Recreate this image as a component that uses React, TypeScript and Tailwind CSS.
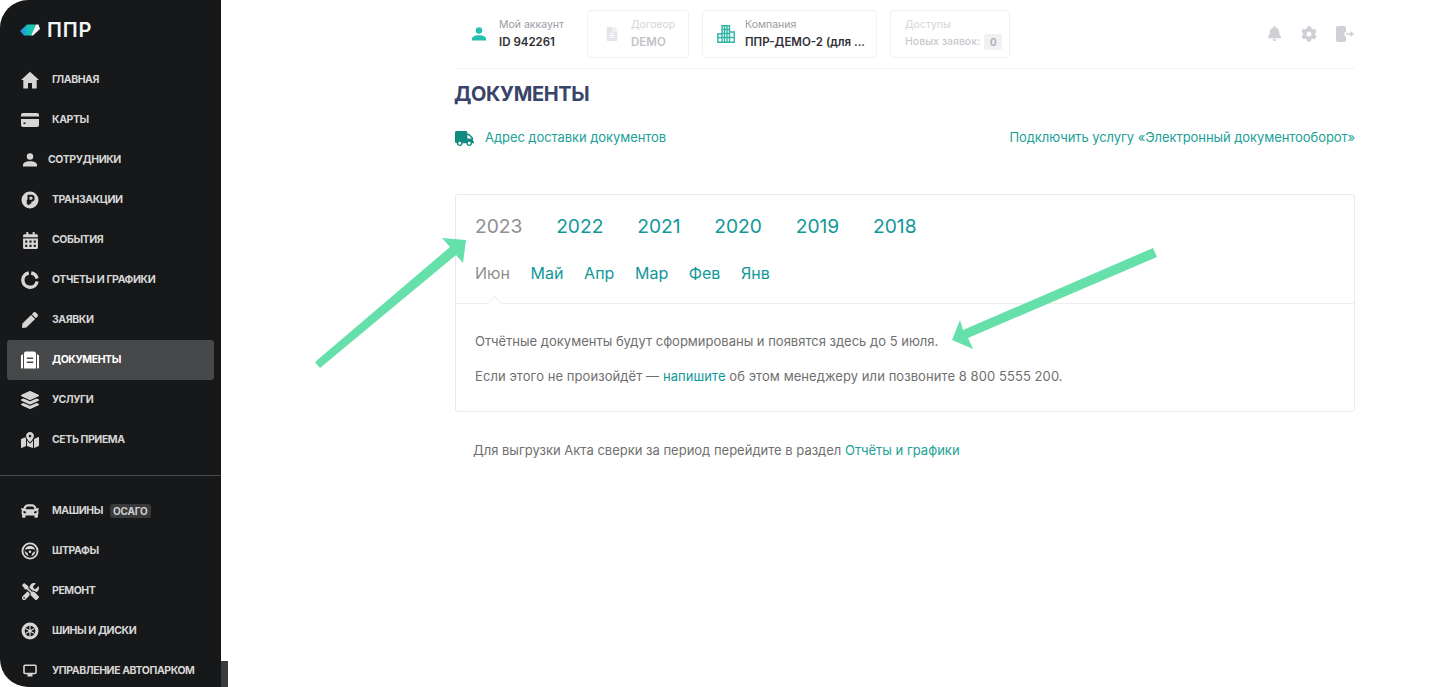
import React from "react";
import { FaCalendarAlt, FaPen, FaLayerGroup, FaMapMarkedAlt, FaCar, FaTools, FaBell, FaCog, FaTruck, FaFileAlt } from "react-icons/fa";

const Home = () => (
  <svg viewBox="0 0 18 18" className="w-[18px] h-[18px]" fill="currentColor"><path d="M9 .8 18 9h-2.300v8.500H11v-5.500H7v5.500H2.300V9H0L9 .8Z" /></svg>
);
const Card = () => (
  <svg viewBox="0 0 18 14" className="w-[18px] h-[14px]" fill="currentColor"><path d="M2 0h14a2 2 0 0 1 2 2v1.500H0V2a2 2 0 0 1 2-2Z" /><path fillRule="evenodd" d="M0 6h18v6a2 2 0 0 1-2 2H2a2 2 0 0 1-2-2V6Zm2.500 3.500v1.500h2V9.500h-2Z" /></svg>
);
const Person = () => (
  <svg viewBox="0 0 14 14" className="w-[14px] h-[14px]" fill="currentColor"><circle cx="7" cy="3.500" r="3.200" /><path d="M0 12c0-2.600 3-3.800 7-3.800s7 1.200 7 3.800v1.500H0V12Z" /></svg>
);
const Ruble = () => (
  <svg viewBox="0 0 18 18" className="w-[18px] h-[18px]"><circle cx="9" cy="9" r="8.500" fill="currentColor" /><path d="M7.500 14V4.800h2.700a2.400 2.400 0 0 1 0 4.900H5.800M5.800 11.800h4.500" fill="none" stroke="#17181a" strokeWidth="2" /></svg>
);
const Donut = () => (
  <svg viewBox="0 0 18 18" className="w-[18px] h-[18px]" fill="none" stroke="currentColor" strokeWidth="3.400"><path d="M10.200 2A7.200 7.200 0 0 1 16.100 7.500" /><path d="M16.100 10.500A7.200 7.200 0 1 1 7.800 2" /></svg>
);
const Doc = () => (
  <svg viewBox="0 0 18 18" className="w-[18px] h-[18px]" fill="currentColor"><path d="M0 4.500 2 3v14.500H1a1 1 0 0 1-1-1v-12Zm18 0L16 3v14.500h1a1 1 0 0 0 1-1v-12Z" /><path fillRule="evenodd" d="M5 .5h8a2 2 0 0 1 2 2v15H3v-15a2 2 0 0 1 2-2Zm.8 6v1.500h6.400V6.500H5.800Zm0 4v1.500h6.400v-1.500H5.800Z" /></svg>
);
const Wheel = () => (
  <svg viewBox="0 0 18 18" className="w-[18px] h-[18px]"><circle cx="9" cy="9" r="8.500" fill="currentColor" /><circle cx="9" cy="9" r="6" fill="none" stroke="#17181a" strokeWidth="1.300" /><path d="M3 8c3.500-1.400 8.500-1.400 12 0l-2.200 2.200c-1 0-1.800.8-2.300 4.300h-3c-.5-3.500-1.300-4.300-2.300-4.300L3 8Z" fill="#17181a" /><circle cx="9" cy="9.800" r="1.300" fill="currentColor" /></svg>
);
const Tire = () => (
  <svg viewBox="0 0 18 18" className="w-[18px] h-[18px]"><circle cx="9" cy="9" r="8.500" fill="currentColor" /><circle cx="9" cy="9" r="5.300" fill="#17181a" /><circle cx="9" cy="9" r="1.500" fill="currentColor" /><path d="M9 4v10M4.700 6.500l8.600 5M13.300 6.500l-8.600 5" stroke="currentColor" strokeWidth="1.200" /></svg>
);
const Monitor = () => (
  <svg viewBox="0 0 14 14" className="w-[14px] h-[14px]" fill="none"><rect x="1" y="1.200" width="12" height="8.300" rx="1" stroke="currentColor" strokeWidth="1.600" /><path d="M4.500 12.500h5V10h-5z" fill="currentColor" /></svg>
);
const Building = () => (
  <svg viewBox="0 0 18 18" className="w-[18px] h-[18px]" fill="none" stroke="#2fb5a5" strokeWidth="1.400"><path d="M5 .8h7.500v16.400H5zM.8 9h4.200v8.200H.8zM12.500 7h4.700v10.200h-4.700z" /><path d="M5 4.500h7.500M5 8.500h7.500M5 12.500h12M.8 12.500H5M7.500.8v16.400M10 .8v16.400" /></svg>
);
const Exit = () => (
  <svg viewBox="0 0 18 16" className="w-[18px] h-[16px]" fill="#cfd0d6"><path d="M0 2a2 2 0 0 1 2-2h6a2 2 0 0 1 2 2v4H8.500v4H10v4a2 2 0 0 1-2 2H2a2 2 0 0 1-2-2V2Z" /><path d="M10 7.200h4.500V5L18 8l-3.500 3V8.800H10z" /></svg>
);
const Logo = () => (
  <svg viewBox="0 0 20 12" className="w-[20px] h-[12px]"><defs><linearGradient id="lg" x1="0" y1="0" x2="1" y2="0"><stop offset="0" stopColor="#2a86ee" /><stop offset="0.6" stopColor="#14c8ae" /></linearGradient></defs><path d="M0 7 7 .5H16L11 11.500H4Z" fill="url(#lg)" /><path d="M16 .5h2.500L20 5l-7 6.500h-2Z" fill="#f4f5f5" /></svg>
);

type Item = { icon: React.ReactNode; label: string; active?: boolean; badge?: string; tight?: boolean };
const top: Item[] = [
  { icon: <Home />, label: "ГЛАВНАЯ" },
  { icon: <Card />, label: "КАРТЫ" },
  { icon: <Person />, label: "СОТРУДНИКИ", tight: true },
  { icon: <Ruble />, label: "ТРАНЗАКЦИИ" },
  { icon: <FaCalendarAlt size={17} />, label: "СОБЫТИЯ" },
  { icon: <Donut />, label: "ОТЧЕТЫ И ГРАФИКИ" },
  { icon: <FaPen size={16} />, label: "ЗАЯВКИ" },
  { icon: <Doc />, label: "ДОКУМЕНТЫ", active: true },
  { icon: <FaLayerGroup size={18} />, label: "УСЛУГИ" },
  { icon: <FaMapMarkedAlt size={18} />, label: "СЕТЬ ПРИЕМА" },
];
const bottom: Item[] = [
  { icon: <FaCar size={18} />, label: "МАШИНЫ", badge: "ОСАГО" },
  { icon: <Wheel />, label: "ШТРАФЫ" },
  { icon: <FaTools size={17} />, label: "РЕМОНТ" },
  { icon: <Tire />, label: "ШИНЫ И ДИСКИ" },
  { icon: <Monitor />, label: "УПРАВЛЕНИЕ АВТОПАРКОМ" },
];

function NavRow({ item }: { item: Item }) {
  return (
    <div className={`h-10 shrink-0 mx-[7px] rounded-[3px] flex items-center pl-[14px] ${item.active ? "bg-[#474849] text-white" : "text-[#d6d6d6]"}`}>
      <span className="w-[18px] h-5 flex items-center justify-center shrink-0">{item.icon}</span>
      <span className={`${item.tight ? "ml-[9px]" : "ml-[13px]"} text-[10.5px] font-bold tracking-[-0.42px] whitespace-nowrap`}>{item.label}</span>
      {item.badge && <span className="ml-[7px] h-[14px] px-[3px] rounded-[3px] bg-[#38393b] text-[10px] font-bold leading-[14px] text-[#cfcfcf] tracking-[-0.2px]">{item.badge}</span>}
    </div>
  );
}

function Tile({ icon, label, value, muted, w, border = true, gap, pl = "pl-[17px]" }: { icon: React.ReactNode; label: string; value: React.ReactNode; muted?: boolean; w: string; border?: boolean; gap: string; pl?: string }) {
  return (
    <div className={`${w} h-[48px] rounded-[4px] flex items-center ${pl} ${gap} ${border ? "border border-[#f1f1f3]" : ""}`}>
      {icon}
      <div className="flex flex-col gap-[2px]">
        <span className={`text-[10.5px] leading-[14px] ${muted ? "text-[#d3d4d8]" : "text-[#9a9ba3]"}`}>{label}</span>
        <span className={`text-[11.5px] leading-[16px] font-semibold whitespace-nowrap ${muted ? "text-[#c2c3c8]" : "text-[#2f3035]"}`}>{value}</span>
      </div>
    </div>
  );
}

const years = ["2022", "2021", "2020", "2019", "2018"];
const months = ["Май", "Апр", "Мар", "Фев", "Янв"];

export default function App() {
  return (
    <div className="relative w-[1449px] h-[687px] overflow-hidden bg-white flex font-['Inter',sans-serif]">
      <aside className="w-[221px] h-full shrink-0 bg-[#17181a] rounded-l-[28px] overflow-hidden flex flex-col">
        <div className="h-[60px] shrink-0 flex items-center pl-[20px] gap-[7px]">
          <Logo />
          <span className="text-[20px] font-semibold text-[#f4f5f5] tracking-[0.8px] leading-none">ППР</span>
        </div>
        <div className="flex flex-col shrink-0">
          {top.map((i) => <NavRow key={i.label} item={i} />)}
        </div>
        <div className="mt-[15px] shrink-0 border-t border-[#4a4b4d] pt-[15px] flex flex-col">
          {bottom.map((i) => <NavRow key={i.label} item={i} />)}
        </div>
      </aside>
      <div className="w-[7px] h-[26px] self-end bg-[#3b3c3e] shrink-0" />
      <main className="ml-[227px] w-[900px] shrink-0 flex flex-col">
        <div className="h-[69px] pt-[10px] border-b border-[#f3f3f5] flex items-start">
          <Tile w="w-[130px]" gap="gap-[13px]" border={false} icon={<span className="text-[#25bfb0]"><Person /></span>} label="Мой аккаунт" value="ID 942261" />
          <Tile w="w-[102px] ml-[2px]" gap="gap-[12px]" muted icon={<FaFileAlt size={14} className="text-[#e4e5ea]" />} label="Договор" value="DEMO" />
          <Tile w="w-[175px] ml-[13px]" pl="pl-[14px]" gap="gap-[10px]" icon={<Building />} label="Компания" value="ППР-ДЕМО-2 (для ..." />
          <div className="w-[120px] h-[48px] ml-[13px] rounded-[4px] border border-[#f1f1f3] pl-[14px] flex flex-col justify-center gap-[2px]">
            <span className="text-[10.5px] leading-[14px] text-[#d3d4d8]">Доступы</span>
            <span className="text-[10.5px] leading-[16px] font-medium text-[#c8c9ce] flex items-center gap-[4px]">Новых заявок: <span className="w-[18px] h-[16px] rounded-[3px] bg-[#f1f1f3] text-center text-[#a8a9af] text-[10px] font-semibold">0</span></span>
          </div>
          <div className="ml-auto mr-[1px] h-[48px] flex items-center gap-[19px] pb-[1px] text-[#cfd0d6]">
            <FaBell size={15} />
            <FaCog size={16} />
            <Exit />
          </div>
        </div>
        <h1 className="mt-[14px] text-[20px] leading-[22px] font-bold text-[#3a4468] tracking-[-0.35px] -ml-[1px]">ДОКУМЕНТЫ</h1>
        <div className="mt-[23px] h-[20px] flex items-center justify-between text-[13px] tracking-[-0.07px] text-[#20a198]">
          <span className="flex items-center gap-[11px]"><FaTruck size={19} className="text-[#118a80]" />Адрес доставки документов</span>
          <span>Подключить услугу «Электронный документооборот»</span>
        </div>
        <section className="mt-[46px] h-[218px] border border-[#e9e9ea] rounded-[3px]">
          <div className="h-[109px] border-b border-[#eeeeef] relative pl-[19px]">
            <div className="pt-[17px] h-[60px] flex gap-[33.8px] text-[19.2px] leading-[28px] text-[#10989a]">
              <span className="text-[#8f8f8f]">2023</span>
              {years.map((y) => <span key={y}>{y}</span>)}
            </div>
            <div className="pt-[6px] flex gap-[20.6px] text-[16px] leading-[24px] text-[#10989a]">
              <span className="text-[#8f8f8f]">Июн</span>
              {months.map((m) => <span key={m}>{m}</span>)}
            </div>
            <span className="absolute left-[33px] bottom-[-6px] w-[11px] h-[11px] rotate-45 bg-white border-l border-t border-[#eeeeef]" />
          </div>
          <div className="pl-[19px] pt-[27px] text-[13px] leading-[20px] text-[#6f6f6f] flex flex-col gap-[15px]">
            <p>Отчётные документы будут сформированы и появятся здесь до 5 июля.</p>
            <p className="tracking-[0.07px]">Если этого не произойдёт — <span className="text-[#10989a]">напишите</span> об этом менеджеру или позвоните 8 800 5555 200.</p>
          </div>
        </section>
        <p className="mt-[28px] pl-[18px] text-[13px] leading-[20px] text-[#6f6f6f]">Для выгрузки Акта сверки за период перейдите в раздел <span className="text-[#20a198]">Отчёты и графики</span></p>
      </main>
      <svg className="absolute inset-0 pointer-events-none" width="1449" height="687" viewBox="0 0 1449 687">
        <path d="M315 362 450 247 442 238 466 240 463 263 456 255 320 368Z" fill="#66e0ab" />
        <path d="M1153 248 963 330 960 320 952 340 973 349 968 338 1157 257Z" fill="#66e0ab" />
      </svg>
    </div>
  );
}
